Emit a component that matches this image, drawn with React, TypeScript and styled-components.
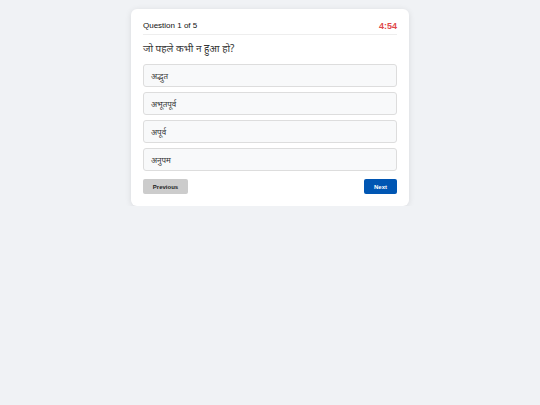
import React, { useState } from 'react';
import styled, { createGlobalStyle } from 'styled-components';

const GlobalStyle = createGlobalStyle`
  body {
    margin: 0;
    background: #f0f2f5;
    font-family: "Liberation Sans", Arial, "Noto Sans", sans-serif;
  }
`;

const options = ['अद्भुत', 'अभूतपूर्व', 'अपूर्व', 'अनुपम'];

function App() {
  const [selected, setSelected] = useState<number | null>(null);

  return (
    <>
      <GlobalStyle />
      <Page>
        <Card>
          <Header>
            <Counter>Question 1 of 5</Counter>
            <Timer>4:54</Timer>
          </Header>
          <Question>जो पहले कभी न हुआ हो?</Question>
          <OptionList>
            {options.map((opt, i) => (
              <Option key={opt} $active={selected === i} onClick={() => setSelected(i)}>
                {opt}
              </Option>
            ))}
          </OptionList>
          <Nav>
            <NavButton $variant="prev">Previous</NavButton>
            <NavButton $variant="next">Next</NavButton>
          </Nav>
        </Card>
      </Page>
    </>
  );
}

const Page = styled.div`
  display: flex;
  justify-content: center;
  padding-top: 9px;
`;

const Card = styled.div`
  width: 254px;
  background: #ffffff;
  border-radius: 6px;
  box-shadow: 0 1px 6px rgba(0, 0, 0, 0.1);
  padding: 10px 12px 12px;
`;

const Header = styled.div`
  display: flex;
  justify-content: space-between;
  align-items: center;
  height: 12px;
  padding-bottom: 3px;
  border-bottom: 1px solid #eeeeee;
`;

const Counter = styled.span`
  font-size: 8px;
  color: #111;
`;

const Timer = styled.span`
  font-size: 9px;
  font-weight: 700;
  color: #e0484a;
  margin-top: 2px;
`;

const Question = styled.div`
  font-family: "Noto Sans", "Liberation Sans", sans-serif;
  font-size: 10px;
  color: #333;
  margin: 5px 0 8px;
  line-height: 16px;
`;

const OptionList = styled.div`
  display: flex;
  flex-direction: column;
  gap: 5px;
`;

const Option = styled.div<{ $active: boolean }>`
  box-sizing: border-box;
  height: 23px;
  display: flex;
  align-items: center;
  padding: 0 7px;
  font-family: "Noto Sans", "Liberation Sans", sans-serif;
  font-size: 8px;
  color: #333;
  background: ${(p) => (p.$active ? '#e8f0fe' : '#f8f9fa')};
  border: 1px solid #dddddd;
  border-radius: 3px;
  cursor: pointer;
`;

const Nav = styled.div`
  display: flex;
  justify-content: space-between;
  margin-top: 8px;
`;

const NavButton = styled.button<{ $variant: 'prev' | 'next' }>`
  box-sizing: border-box;
  height: 15px;
  width: ${(p) => (p.$variant === 'prev' ? '45px' : '33px')};
  padding: 0;
  border: none;
  border-radius: 2px;
  font-family: "Liberation Sans", Arial, sans-serif;
  font-size: 6px;
  font-weight: 700;
  cursor: pointer;
  background: ${(p) => (p.$variant === 'prev' ? '#cccccc' : '#0056b3')};
  color: ${(p) => (p.$variant === 'prev' ? '#222' : '#fff')};
`;

export default App;
